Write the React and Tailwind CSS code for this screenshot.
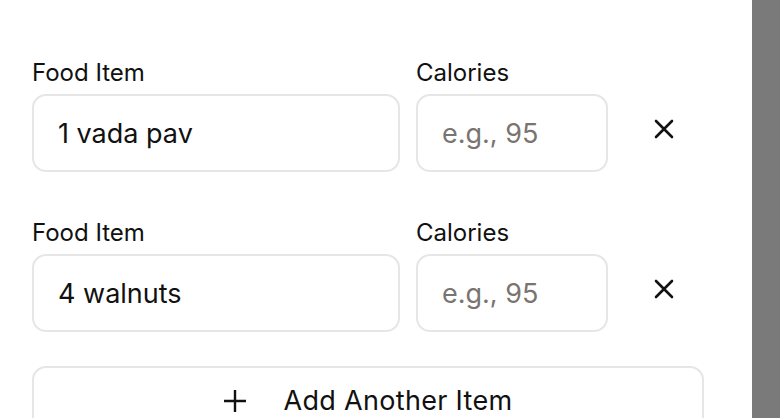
import React from "react";

function XIcon() {
  return (
    <svg width="20" height="20" viewBox="0 0 20 20" fill="none" stroke="#111" strokeWidth="2.6" strokeLinecap="round">
      <path d="M2 2 L18 18 M18 2 L2 18" />
    </svg>
  );
}

function PlusIcon() {
  return (
    <svg width="22" height="22" viewBox="0 0 22 22" fill="none" stroke="#111" strokeWidth="2.4">
      <path d="M11 0 V22 M0 11 H22" />
    </svg>
  );
}

function Row({ value }) {
  return (
    <div className="flex gap-4">
      <div className="flex flex-1 flex-col gap-[7px]">
        <label className="text-[24px] leading-[28px] text-[#111]">Food Item</label>
        <input
          defaultValue={value}
          className="h-[78px] w-full rounded-[14px] border-2 border-[#e6e6e6] bg-white px-6 text-[27px] text-[#111] outline-none"
          style={{ fontFamily: "Inter, sans-serif" }}
        />
      </div>
      <div className="flex w-[192px] flex-col gap-[7px]">
        <label className="text-[24px] leading-[28px] text-[#111]">Calories</label>
        <input
          placeholder="e.g., 95"
          className="h-[78px] w-full rounded-[14px] border-2 border-[#e6e6e6] bg-white px-6 text-[27px] text-[#111] outline-none placeholder:text-[#7a7470]"
          style={{ fontFamily: "Inter, sans-serif" }}
        />
      </div>
      <div className="flex w-[80px] items-end">
        <div className="flex h-[78px] w-full items-center justify-center pb-2">
          <XIcon />
        </div>
      </div>
    </div>
  );
}

export default function App() {
  return (
    <div className="flex h-[418px] w-[780px] overflow-hidden bg-white" style={{ fontFamily: "Inter, sans-serif" }}>
      <div className="flex w-[752px] flex-col pl-8 pr-12 pt-[59px]">
        <div className="flex flex-col gap-[47px]">
          <Row value="1 vada pav" />
          <Row value="4 walnuts" />
        </div>
        <button className="mt-[34px] flex h-[78px] w-full shrink-0 items-center justify-center gap-[38px] rounded-[14px] border-2 border-[#e6e6e6] bg-white pb-2 text-[27px] tracking-[0.3px] text-[#111]">
          <PlusIcon />
          <span>Add Another Item</span>
        </button>
      </div>
      <div className="w-[28px] bg-[#7a7a7a]" />
    </div>
  );
}
